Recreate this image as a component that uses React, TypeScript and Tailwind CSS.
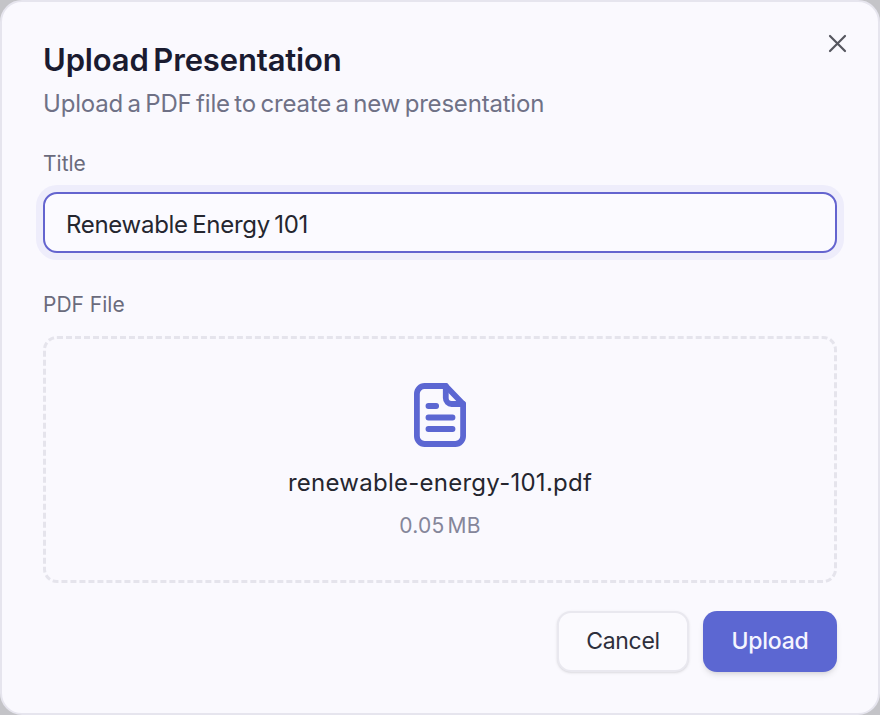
export default function App() {
  return (
    <div className="w-[880px] h-[715px] overflow-hidden bg-[#c4c4c8] [font-family:Inter,'Liberation_Sans',sans-serif]">
      <div className="relative h-[715px] w-[880px] rounded-[22px] bg-[#faf9fe] border-2 border-[#e6e5ee] flex flex-col px-[41px]">
        <button className="absolute right-[30px] top-[30px] text-[#55565f]">
          <svg width="22" height="22" viewBox="0 0 22 22" fill="none" stroke="currentColor" strokeWidth="2.2" strokeLinecap="round">
            <path d="M4 4 L19 19 M19 4 L4 19" />
          </svg>
        </button>
        <h2 className="mt-[39px] h-[38px] text-[31px] leading-[38px] font-semibold tracking-[-0.15px] [word-spacing:-3px] text-[#1a1b30]">Upload Presentation</h2>
        <p className="mt-[9px] h-[32px] text-[24px] leading-[32px] font-normal tracking-[-0.2px] [word-spacing:-2px] text-[#6f7186]">Upload a PDF file to create a new presentation</p>
        <label className="mt-[30px] h-[28px] text-[21px] leading-[28px] tracking-[0px] text-[#6a6b7c]">Title</label>
        <div className="mt-[14px] h-[61px] w-[794px] rounded-[14px] border-2 border-[#6464cf] bg-[#fbfaff] shadow-[0_0_0_7px_#eeedfb] flex items-center pl-[21px] pt-[4px] text-[24px] tracking-[-0.3px] [word-spacing:-2px] text-[#25262f]">
          Renewable Energy 101
        </div>
        <label className="mt-[38px] h-[28px] text-[21px] leading-[28px] tracking-[0px] text-[#6a6b7c]">PDF File</label>
        <div className="mt-[17px] h-[247px] w-[794px] rounded-[14px] border-[3px] border-dashed border-[#e5e4ec] flex flex-col items-center">
          <svg className="mt-[44px]" width="52" height="64" viewBox="0 0 54 64" preserveAspectRatio="none" fill="none" stroke="#5c67d2" strokeWidth="6" strokeLinecap="round" strokeLinejoin="round">
            <path d="M33 3 H11 a8 8 0 0 0 -8 8 V53 a8 8 0 0 0 8 8 H43 a8 8 0 0 0 8 -8 V21 Z" />
            <path d="M33 3 V15 a6 6 0 0 0 6 6 H51" />
            <path d="M15 23 H23 M15 34.500 H40 M15 46 H40" />
          </svg>
          <div className="mt-[20px] h-[32px] text-[24px] leading-[32px] tracking-[0.26px] text-[#25262f]">renewable-energy-101.pdf</div>
          <div className="mt-[14px] h-[26px] text-[21px] leading-[26px] tracking-[0.2px] [word-spacing:-3px] text-[#85869a]">0.05 MB</div>
        </div>
        <div className="mt-[28px] w-[794px] flex justify-end gap-[14px]">
          <button className="h-[61px] w-[132px] rounded-[14px] border-2 border-[#e9e8ef] bg-[#fbfafe] text-[23px] tracking-[-0.3px] text-[#2e2f3c] shadow-sm">Cancel</button>
          <button className="h-[61px] w-[134px] rounded-[14px] bg-[#5c67d2] text-[23px] font-medium tracking-[-0.2px] text-[#f5f5ff] shadow-md">Upload</button>
        </div>
      </div>
    </div>
  );
}
